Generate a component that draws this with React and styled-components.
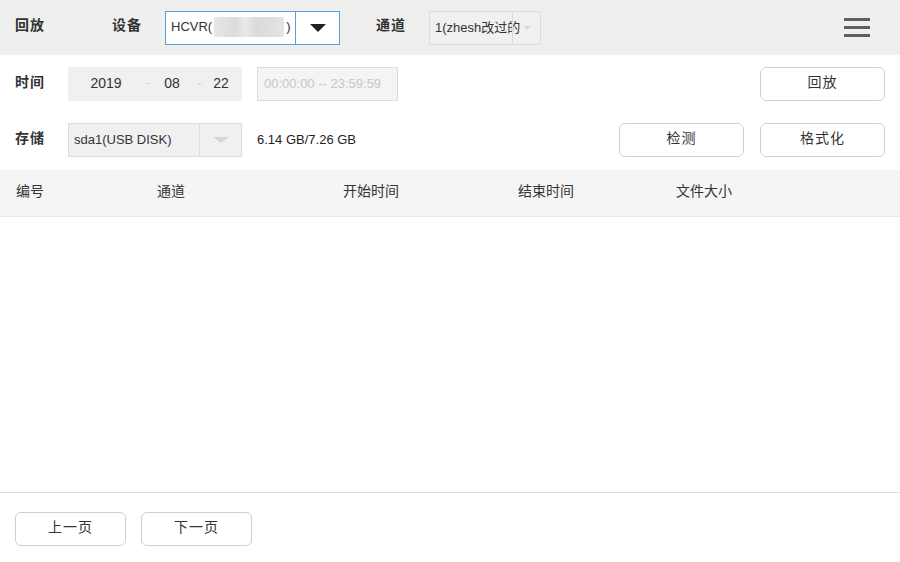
import React from "react";
import styled, { createGlobalStyle } from "styled-components";

const Global = createGlobalStyle`
  html, body { margin: 0; padding: 0; background: #fff; overflow: hidden; }
  body { font-family: "Liberation Sans", "Noto Sans CJK SC", Arial, sans-serif; color: #333; }
  * { box-sizing: border-box; }
`;

const Page = styled.div`
  width: 900px;
  height: 562px;
  display: flex;
  flex-direction: column;
`;

const TopBar = styled.div`
  height: 55px;
  background: #efefee;
  display: flex;
  align-items: center;
  padding-left: 15px;
  padding-right: 30px;
`;

const Label = styled.div`
  width: ${(p) => p.$w}px;
  flex: none;
  font-size: 14px;
  font-weight: bold;
  color: #333;
  letter-spacing: 1px;
  line-height: 20px;
  padding-bottom: 5px;
`;

const Select = styled.div`
  width: ${(p) => p.$w}px;
  height: ${(p) => p.$h || 34}px;
  flex: none;
  display: flex;
  align-items: stretch;
  border: 1px solid ${(p) => (p.$active ? "#5b9dd9" : "#dcdcdc")};
  background: ${(p) => (p.$active ? "#fff" : "#f0f0f0")};
  font-size: 13px;
  color: #333;
`;

const SelectText = styled.div`
  flex: 1;
  display: flex;
  align-items: center;
  padding-left: ${(p) => p.$pl || 5}px;
  padding-bottom: 2px;
  white-space: nowrap;
  overflow: visible;
  min-width: 0;
`;

const SelectArrow = styled.div`
  width: ${(p) => p.$w}px;
  flex: none;
  border-left: 1px solid ${(p) => (p.$active ? "#5b9dd9" : "#dcdcdc")};
  display: flex;
  align-items: center;
  justify-content: center;
`;

const Triangle = styled.div`
  width: 0;
  height: 0;
  border-left: ${(p) => p.$s}px solid transparent;
  border-right: ${(p) => p.$s}px solid transparent;
  border-top: ${(p) => p.$h}px solid ${(p) => p.$c};
`;

const Masked = styled.span`
  display: inline-block;
  width: 70px;
  height: 20px;
  margin: 0 2px;
  background: linear-gradient(90deg, #e6e6e6, #dcdcdc 30%, #e9e9e9 45%, #dadada 60%, #e4e4e4);
  border-radius: 2px;
`;

const Burger = styled.div`
  margin-left: auto;
  width: 26px;
  display: flex;
  flex-direction: column;
  gap: 5px;
  margin-top: -1px;
  & > span {
    display: block;
    height: 3px;
    background: #5f5f5f;
  }
`;

const Row = styled.div`
  display: flex;
  align-items: center;
  padding: 0 15px;
  margin-top: ${(p) => p.$mt}px;
  height: 34px;
`;

const DateBox = styled.div`
  width: 174px;
  height: 34px;
  background: #f0f0f0;
  display: flex;
  align-items: center;
  padding-bottom: 2px;
  font-size: 14px;
  color: #333;
`;

const DatePart = styled.span`
  width: ${(p) => p.$w}px;
  text-align: center;
  flex: none;
`;

const Dash = styled.span`
  width: ${(p) => p.$w}px;
  text-align: center;
  color: #d0d0d0;
  flex: none;
`;

const TimeBox = styled.div`
  margin-left: 15px;
  width: 141px;
  height: 34px;
  background: #f4f4f4;
  border: 1px solid #dcdcdc;
  display: flex;
  align-items: center;
  padding-left: 6px;
  padding-bottom: 2px;
  font-size: 13px;
  color: #c8c8c8;
  white-space: nowrap;
`;

const Info = styled.div`
  margin-left: 15px;
  font-size: 13px;
  color: #222;
  padding-bottom: 2px;
`;

const Button = styled.button`
  width: ${(p) => p.$w || 125}px;
  height: 34px;
  flex: none;
  margin-left: ${(p) => p.$ml || 0}px;
  background: #fff;
  border: 1px solid #cfcfcf;
  border-radius: 6px;
  font-family: inherit;
  font-size: 14px;
  line-height: 20px;
  color: #333;
  letter-spacing: 1px;
  padding: 0 0 5px;
`;

const Spacer = styled.div`
  flex: 1;
`;

const TableHead = styled.div`
  margin-top: 13px;
  height: 47px;
  background: #f5f5f6;
  border-bottom: 1px solid #e9e9ea;
  display: grid;
  grid-template-columns: 141px 186px 175px 158px 1fr;
  align-items: center;
  padding-left: 16px;
  padding-bottom: 5px;
  font-size: 14px;
  line-height: 20px;
  color: #333;
`;

const TableBody = styled.div`
  flex: 1;
  background: #fff;
`;

const Footer = styled.div`
  height: 70px;
  border-top: 1px solid #dddddd;
  display: flex;
  padding: 19px 15px 0;
  gap: 15px;
`;

export default function App() {
  return (
    <Page>
      <Global />
      <TopBar>
        <Label $w={97}>回放</Label>
        <Label $w={53}>设备</Label>
        <Select $w={175} $active>
          <SelectText>
            HCVR(<Masked />)
          </SelectText>
          <SelectArrow $w={44} $active>
            <Triangle $s={8} $h={8} $c="#222" />
          </SelectArrow>
        </Select>
        <Label $w={36} />
        <Label $w={53}>通道</Label>
        <Select $w={112}>
          <SelectText>1(zhesh改过的</SelectText>
          <SelectArrow $w={28}>
            <Triangle $s={4} $h={4} $c="#d8d8d8" />
          </SelectArrow>
        </Select>
        <Burger>
          <span />
          <span />
          <span />
        </Burger>
      </TopBar>

      <Row $mt={12}>
        <Label $w={53}>时间</Label>
        <DateBox>
          <DatePart $w={76}>2019</DatePart>
          <Dash $w={8}>-</Dash>
          <DatePart $w={40}>08</DatePart>
          <Dash $w={14}>-</Dash>
          <DatePart $w={30}>22</DatePart>
        </DateBox>
        <TimeBox>00:00:00 -- 23:59:59</TimeBox>
        <Spacer />
        <Button>回放</Button>
      </Row>

      <Row $mt={22}>
        <Label $w={53}>存储</Label>
        <Select $w={174}>
          <SelectText>sda1(USB DISK)</SelectText>
          <SelectArrow $w={42}>
            <Triangle $s={8} $h={6} $c="#d6d6d6" />
          </SelectArrow>
        </Select>
        <Info>6.14 GB/7.26 GB</Info>
        <Spacer />
        <Button>检测</Button>
        <Button $ml={16}>格式化</Button>
      </Row>

      <TableHead>
        <span>编号</span>
        <span>通道</span>
        <span>开始时间</span>
        <span>结束时间</span>
        <span>文件大小</span>
      </TableHead>
      <TableBody />

      <Footer>
        <Button $w={111}>上一页</Button>
        <Button $w={111}>下一页</Button>
      </Footer>
    </Page>
  );
}
